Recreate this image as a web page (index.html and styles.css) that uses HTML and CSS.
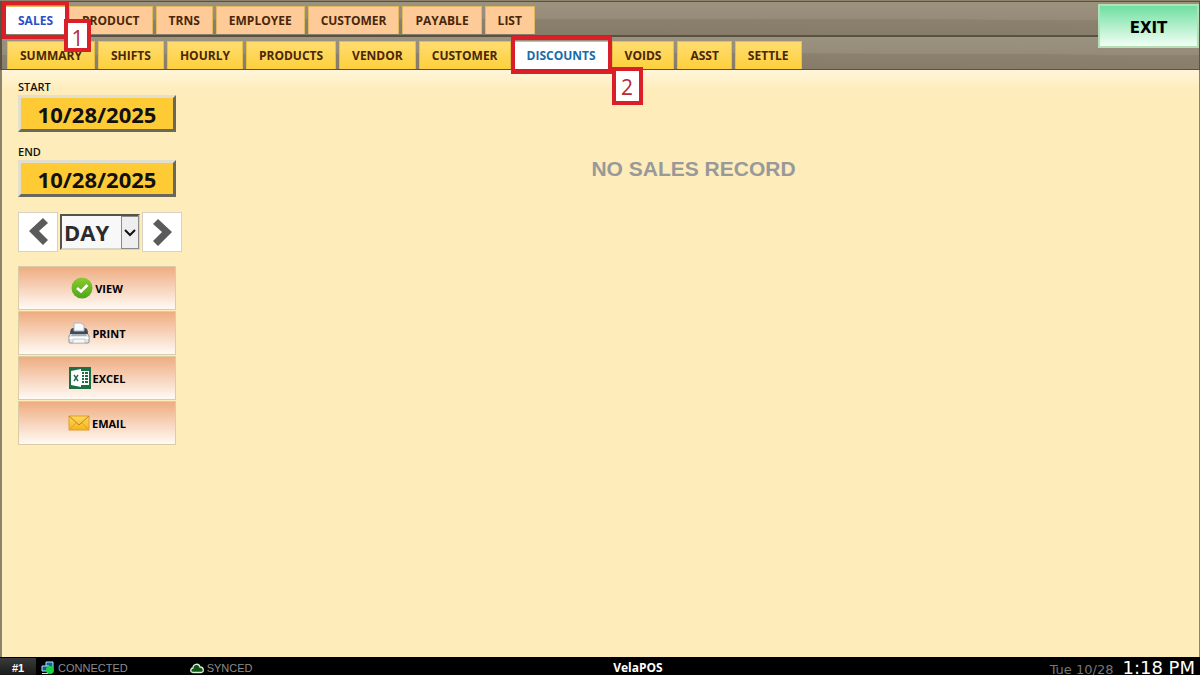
FILE: index.html
```
<!DOCTYPE html>
<html lang="en">
<head>
  <meta charset="UTF-8">
  <meta name="viewport" content="width=device-width, initial-scale=1.0">
  <title>VelaPOS - Discounts</title>
  <link rel="stylesheet" href="styles.css">
</head>
<body>

  <header class="header">
    <nav class="tabs main-tabs">
      <button class="tab active">SALES<span class="mark"></span><span class="step step-one">1</span></button>
      <button class="tab">PRODUCT</button>
      <button class="tab">TRNS</button>
      <button class="tab">EMPLOYEE</button>
      <button class="tab">CUSTOMER</button>
      <button class="tab">PAYABLE</button>
      <button class="tab">LIST</button>
    </nav>
    <nav class="tabs sub-tabs">
      <button class="tab">SUMMARY</button>
      <button class="tab">SHIFTS</button>
      <button class="tab">HOURLY</button>
      <button class="tab">PRODUCTS</button>
      <button class="tab">VENDOR</button>
      <button class="tab">CUSTOMER</button>
      <button class="tab active">DISCOUNTS<span class="mark"></span><span class="step step-two">2</span></button>
      <button class="tab">VOIDS</button>
      <button class="tab">ASST</button>
      <button class="tab">SETTLE</button>
    </nav>
    <button class="exit">EXIT</button>
  </header>

  <main class="content">
    <aside class="sidebar">
      <!-- date range -->
      <label class="label" for="start">START</label>
      <button class="date" id="start">10/28/2025</button>
      <label class="label" for="end">END</label>
      <button class="date" id="end">10/28/2025</button>

      <div class="period">
        <button class="arrow" aria-label="Previous">
          <svg width="38" height="38" viewBox="0 0 38 38"><path d="M10 18L24 5L29 10L20 18L29 27L24 32Z" fill="#5b5b5b"/></svg>
        </button>
        <div class="select-box">
          <select class="select" aria-label="Period">
            <option>DAY</option>
            <option>WEEK</option>
            <option>MONTH</option>
          </select>
          <span class="select-arrow">
            <svg width="12" height="8" viewBox="0 0 12 8"><path d="M1 1L6 6L11 1" fill="none" stroke="#111" stroke-width="2"/></svg>
          </span>
        </div>
        <button class="arrow" aria-label="Next">
          <svg width="38" height="38" viewBox="0 0 38 38"><path d="M29 19L15 6L10 11L19 19L10 28L15 33Z" fill="#5b5b5b"/></svg>
        </button>
      </div>

      <!-- actions -->
      <div class="actions">
        <button class="action">
          <svg width="22" height="22" viewBox="0 0 22 22">
            <defs><linearGradient id="green" x1="0" y1="0" x2="0" y2="1"><stop offset="0" stop-color="#8ccb2d"/><stop offset="1" stop-color="#4fa51d"/></linearGradient></defs>
            <circle cx="11" cy="11" r="10.5" fill="url(#green)"/>
            <path d="M6 11L10 14.5L16.5 8" fill="none" stroke="#fff" stroke-width="2.6"/>
          </svg>
          VIEW
        </button>
        <button class="action">
          <svg width="22" height="22" viewBox="0 0 22 22">
            <path d="M4 9H18L21 14V20Q21 21 20 21H2Q1 21 1 20V14Z" fill="#e3e6ea" stroke="#8c9199"/>
            <path d="M2 12Q2 6 5 6H17Q20 6 20 12Z" fill="#444a54"/>
            <path d="M6 1H13L16 3V9H6Z" fill="#f7faff" stroke="#a6b4c6"/>
            <path d="M4 12H18L19 14H3Z" fill="#aab0ba"/>
            <path d="M1.5 15H20.5V17H1.5Z" fill="#fff"/>
            <path d="M5 17H17V21H5Z" fill="#f7f7f8" stroke="#c5c8cd"/>
          </svg>
          PRINT
        </button>
        <button class="action">
          <svg width="22" height="22" viewBox="0 0 22 22">
            <path d="M0 0H22V22H0Z" fill="#1d7044"/>
            <path d="M11 4H20V18H11Z" fill="#fff"/>
            <path d="M13 6H15M16 6H19M13 9H15M16 9H19M13 12H15M16 12H19M13 15H15M16 15H19" stroke="#1d7044" stroke-width="2"/>
            <path d="M2 4L12 2V20L2 18Z" fill="#fff"/>
            <path d="M5 8L9 14M9 8L5 14" stroke="#1d7044" stroke-width="1.4"/>
          </svg>
          EXCEL
        </button>
        <button class="action">
          <svg width="22" height="22" viewBox="0 0 22 22">
            <defs><linearGradient id="gold" x1="0" y1="0" x2="0" y2="1"><stop offset="0" stop-color="#ffd95a"/><stop offset="1" stop-color="#f8b31f"/></linearGradient></defs>
            <path d="M1 4H21V18H1Z" fill="url(#gold)" stroke="#dda02b"/>
            <path d="M1 18L8 11M21 18L14 11" fill="none" stroke="#e2a127"/>
            <path d="M1 4L11 13L21 4" fill="none" stroke="#bd8320"/>
          </svg>
          EMAIL
        </button>
      </div>
    </aside>

    <section class="report">
      <p class="empty">NO SALES RECORD</p>
    </section>
  </main>

  <footer class="footer">
    <span class="station">#1</span>
    <div class="states">
      <span class="status">
        <svg width="14" height="14" viewBox="0 0 14 14">
          <path d="M5 1H12V7H5Z" fill="#12649c" stroke="#b9e4f1"/>
          <path d="M1 5H8V10H1Z" fill="#125c94" stroke="#b9e4f1"/>
          <path d="M1 12.5H7" stroke="#b9e4f1"/>
          <circle cx="9" cy="9" r="4" fill="#19d33f"/>
        </svg>
        CONNECTED
      </span>
      <span class="status">
        <svg width="14" height="14" viewBox="0 0 14 14"><path d="M3 11.500C0 11.500 0 7.500 3 7C3 2.500 9 2 10 6C14 6 14.500 11.500 11 11.500Z" fill="#14541a" stroke="#d5f2d2" stroke-width="1.300"/></svg>
        SYNCED
      </span>
    </div>
    <span class="brand">VelaPOS</span>
    <div class="clock">
      <span class="today">Tue 10/28</span>
      <span class="time">1:18 PM</span>
    </div>
  </footer>

</body>
</html>
```
FILE: styles.css
```
* {
  box-sizing: border-box;
}
body {
  margin: 0;
  min-height: 100vh;
  display: flex;
  flex-direction: column;
  font-family: "Open Sans", "Noto Sans", sans-serif;
  background-color: #feecba;
}
button {
  font-family: inherit;
  cursor: pointer;
}
svg {
  display: block;
  flex: none;
}

/* tabs */
.header {
  position: relative;
  padding-top: 1px;
  background-color: #8d836b;
}
.tabs {
  display: flex;
  gap: 3px;
  border: 1px solid #5a5240;
  border-left-width: 2px;
  background: radial-gradient(ellipse 100% 50% at 50% 100%, #857b68 0, #8b816e 98%, transparent 100%), linear-gradient(#9c9280, #8f8572);
}
.main-tabs {
  padding: 4px 3px 1px;
}
.sub-tabs {
  padding: 4px 5px 0;
}
.tab {
  position: relative;
  height: 28px;
  padding: 0 12px;
  border: 1px solid #e0b860;
  border-bottom: none;
  background-color: #fecb98;
  color: #4a2608;
  font-size: 12px;
  font-weight: bold;
  line-height: 27px;
}
.sub-tabs .tab {
  background: linear-gradient(#ffdc70, #fdd03c);
  border-color: #e5bf48;
}
.tabs .active {
  background: #fff;
  color: #2d4fc9;
}
.sub-tabs .active {
  color: #176ba8;
}
.mark {
  position: absolute;
  z-index: 1;
  top: -6px;
  right: -4px;
  bottom: -5px;
  left: -4px;
  border: 4px solid #da1f29;
}
.step {
  position: absolute;
  z-index: 2;
  border: 4px solid #da1f29;
  background-color: #fff;
  color: #b52b36;
  font-size: 21px;
  font-weight: normal;
}
.step-one {
  top: 12px;
  left: 58px;
  width: 27px;
  height: 33px;
  line-height: 31px;
}
.step-two {
  top: 25px;
  left: 97px;
  width: 31px;
  height: 38px;
  line-height: 33px;
}
.exit {
  position: absolute;
  top: 4px;
  right: 1px;
  width: 101px;
  height: 44px;
  padding: 3px 0 0;
  border: 2px solid #b5dfb4;
  background: linear-gradient(#70dfa0, #f2fff5);
  color: #000;
  font-family: "DejaVu Sans", sans-serif;
  font-size: 15px;
  font-weight: bold;
}

/* content */
.content {
  flex: 1;
  display: flex;
  border: 1px solid #8d836b;
  border-width: 0 1px 0 2px;
  background: linear-gradient(#fff5da, #feecba 20px);
}
.sidebar {
  width: 186px;
  padding: 9px 0 0 16px;
}
.label {
  display: block;
  height: 16px;
  color: #111;
  font-size: 11px;
  font-weight: 600;
  line-height: 16px;
}
.date {
  display: block;
  width: 158px;
  height: 37px;
  margin-bottom: 12px;
  padding: 0;
  border: 3px solid;
  border-color: #e3dfce #6a685a #6a685a #e3dfce;
  background-color: #fecb35;
  color: #111;
  font-size: 22px;
  font-weight: bold;
}
.period {
  display: flex;
  align-items: center;
  gap: 2px;
  margin-top: 15px;
}
.arrow {
  width: 40px;
  height: 40px;
  padding: 0;
  border: 1px solid #d8d2c2;
  background-color: #fff;
}
.select-box {
  position: relative;
  width: 80px;
  height: 36px;
}
.select {
  width: 100%;
  height: 100%;
  padding: 0 0 0 2px;
  appearance: none;
  border: 2px solid;
  border-color: #55524a #d8d4c8 #d8d4c8 #55524a;
  border-radius: 0;
  background-color: #f8f8f8;
  color: #2b2b2b;
  font-family: inherit;
  font-size: 22px;
  font-weight: bold;
}
.select-arrow {
  position: absolute;
  top: 2px;
  right: 1px;
  bottom: 1px;
  display: flex;
  align-items: center;
  padding: 0 2px;
  border: 1px solid #8b8b8b;
  background-color: #eee;
  pointer-events: none;
}
.actions {
  display: grid;
  gap: 1px;
  width: 158px;
  margin-top: 14px;
}
.action {
  display: flex;
  align-items: center;
  justify-content: center;
  gap: 2px;
  height: 44px;
  padding: 0;
  border: 1px solid #d9cda8;
  background: linear-gradient(#efac80, #fffaf4);
  color: #000;
  font-size: 11px;
  font-weight: bold;
}
.report {
  flex: 1;
  padding-top: 86px;
  text-align: center;
}
.empty {
  margin: 0;
  color: #999;
  font-family: "Liberation Sans", sans-serif;
  font-size: 21px;
  font-weight: bold;
  line-height: 26px;
}

/* status bar */
.footer {
  display: grid;
  grid-template-columns: 36px 29fr auto 27fr;
  align-items: center;
  height: 18px;
  background-color: #000;
  color: #fff;
}
.station {
  background: linear-gradient(#3a3a3a, #151515);
  font-family: "Liberation Sans", sans-serif;
  font-size: 11px;
  font-weight: bold;
  line-height: 20px;
  text-align: center;
}
.states {
  display: flex;
  gap: 62px;
  padding-left: 5px;
}
.status {
  display: flex;
  align-items: center;
  gap: 3px;
  color: #8c8c8c;
  font-family: "Liberation Sans", sans-serif;
  font-size: 11px;
}
.brand {
  font-size: 12px;
  font-weight: bold;
  line-height: 18px;
}
.clock {
  display: flex;
  justify-content: flex-end;
  align-items: baseline;
  gap: 9px;
  padding: 2px 5px 0 0;
  font-family: "DejaVu Sans", sans-serif;
  line-height: 18px;
}
.today {
  color: #777;
  font-size: 13px;
}
.time {
  font-size: 18px;
}
```
